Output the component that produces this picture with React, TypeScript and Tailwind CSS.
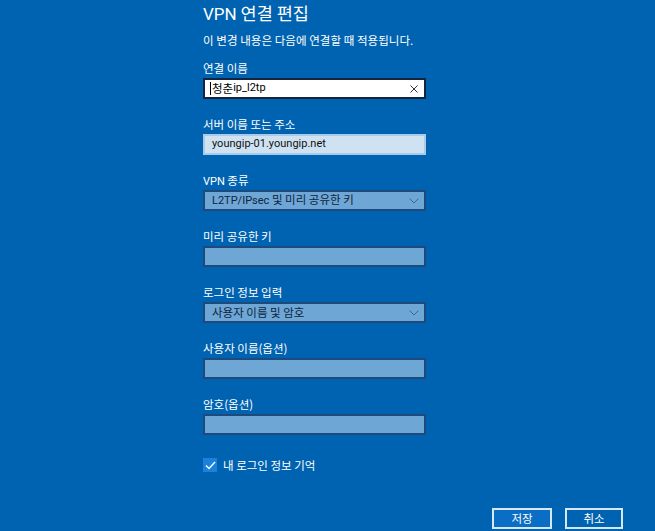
import React from "react";

const FONT = { fontFamily: '"Noto Sans CJK KR", "Noto Sans", sans-serif' };

function L({ children }: { children: React.ReactNode }) {
  return (
    <span className="text-[11px]" style={{ fontFamily: 'Roboto, "Noto Sans", sans-serif' }}>
      {children}
    </span>
  );
}

function Label({ children }: { children: React.ReactNode }) {
  return <div className="h-[16px] text-[11.5px] leading-[16px] text-white">{children}</div>;
}

function Chevron() {
  return (
    <svg width="10" height="6" viewBox="0 0 10 6" className="mr-[5px]">
      <path d="M0.5 0.5 L5 5 L9.5 0.5" fill="none" stroke="#3a6a9c" strokeWidth="1" />
    </svg>
  );
}

function Select({ children }: { children: React.ReactNode }) {
  return (
    <div className="mt-[2px] flex h-[21px] w-[223px] items-center justify-between border-2 border-[#1d4a7a] bg-[#6ea7d5] pl-[7px] text-[11.5px] text-[#0d2440]">
      <span>{children}</span>
      <Chevron />
    </div>
  );
}

function Empty() {
  return <div className="mt-[2px] h-[21px] w-[223px] border-2 border-[#1d4a7a] bg-[#6ea7d5]" />;
}

function Field({ label, children }: { label: React.ReactNode; children: React.ReactNode }) {
  return (
    <div className="flex flex-col">
      <Label>{label}</Label>
      {children}
    </div>
  );
}

export default function App() {
  return (
    <div className="h-[531px] w-[655px] overflow-hidden bg-[#0063b1] text-white" style={FONT}>
      <div className="flex flex-col pl-[203px]">
        <div className="h-[26px] text-[17.5px] leading-[26px]">
          <span style={{ fontFamily: 'Roboto, sans-serif' }} className="text-[17px]">VPN</span> 연결 편집
        </div>
        <div className="mt-[6px] h-[16px] text-[11.5px] leading-[16px] tracking-[0.05px]">
          이 변경 내용은 다음에 연결할 때 적용됩니다.
        </div>
        <div className="mt-[12px] flex flex-col gap-[17px]">
          <Field label="연결 이름">
            <div className="mt-[2px] flex h-[21px] w-[223px] items-center justify-between border-2 border-[#14263f] bg-white pl-[5px] text-[11.5px] text-black">
              <span className="flex items-center">
                <span className="mr-[1px] inline-block h-[13px] w-[1px] bg-black" />
                청춘<L>ip_l2tp</L>
              </span>
              <svg width="8" height="8" viewBox="0 0 8 8" className="mr-[6px]">
                <path d="M0.5 0.5 L7.5 7.5 M7.5 0.5 L0.5 7.5" stroke="#333" strokeWidth="1" />
              </svg>
            </div>
          </Field>
          <Field label="서버 이름 또는 주소">
            <div className="mt-[2px] flex h-[21px] w-[223px] items-center border-2 border-[#a9cbe8] bg-[#cfe2f1] pl-[7px] text-[11.5px] text-[#111]">
              <L>youngip-01.youngip.net</L>
            </div>
          </Field>
          <Field label={<><L>VPN</L> 종류</>}>
            <Select>
              <L>L2TP/IPsec</L> 및 미리 공유한 키
            </Select>
          </Field>
          <Field label="미리 공유한 키">
            <Empty />
          </Field>
          <Field label="로그인 정보 입력">
            <Select>사용자 이름 및 암호</Select>
          </Field>
          <Field label="사용자 이름(옵션)">
            <Empty />
          </Field>
          <Field label="암호(옵션)">
            <Empty />
          </Field>
        </div>
        <div className="mt-[22px] flex items-center gap-[6px]">
          <div className="flex h-[14px] w-[14px] items-center justify-center bg-[#1a82dc]">
            <svg width="11" height="9" viewBox="0 0 11 9">
              <path d="M1 4.5 L4 7.5 L10 1" fill="none" stroke="white" strokeWidth="1.4" />
            </svg>
          </div>
          <span className="text-[11.5px] leading-[16px]">내 로그인 정보 기억</span>
        </div>
      </div>
      <div className="mt-[35px] flex justify-end gap-[13px] pr-[32px]">
        <button className="flex h-[21px] w-[60px] items-center justify-center border-2 border-[#d6e7f6] bg-[#0a6ec4] text-[11.5px] text-white">
          저장
        </button>
        <button className="flex h-[21px] w-[58px] items-center justify-center border-2 border-[#d6e7f6] bg-[#0063b1] text-[11.5px] text-white">
          취소
        </button>
      </div>
    </div>
  );
}
